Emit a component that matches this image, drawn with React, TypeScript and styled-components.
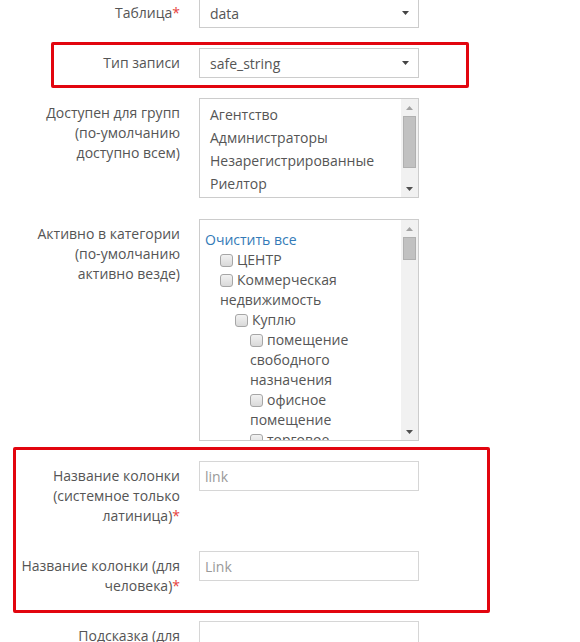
import styled, { createGlobalStyle } from 'styled-components';

const GlobalStyle = createGlobalStyle`
  html, body {
    margin: 0;
    padding: 0;
    background: #fff;
  }
  body {
    font-family: "Open Sans", "Liberation Sans", Arial, sans-serif;
    font-size: 14px;
    color: #555;
    overflow: hidden;
  }
`;

const Form = styled.form`
  width: 580px;
  margin-top: -2px;
  display: flex;
  flex-direction: column;
  gap: 20px;
`;

// red annotation frame drawn over a group of rows
const Highlight = styled.div<{ $top: number; $bottom: number; $left: number; $right: number }>`
  position: relative;
  display: flex;
  flex-direction: column;
  gap: 20px;

  &::after {
    content: '';
    position: absolute;
    top: ${p => p.$top}px;
    bottom: ${p => p.$bottom}px;
    left: ${p => p.$left}px;
    right: ${p => p.$right}px;
    border: 3px solid #e2050f;
    border-radius: 2px;
    pointer-events: none;
  }
`;

const Row = styled.div<{ $extra?: number }>`
  display: flex;
  align-items: flex-start;
  margin-top: ${p => p.$extra ?? 0}px;
`;

const Label = styled.label`
  flex-shrink: 0;
  width: 180px;
  padding: 5px 0;
  line-height: 20px;
  text-align: right;
  white-space: nowrap;
  color: #555;
`;

const Req = styled.span`
  color: #e6423c;
`;

const Control = styled.div`
  margin-left: 19px;
  width: 220px;
  flex-shrink: 0;
`;

const SelectBox = styled.div`
  box-sizing: border-box;
  height: 30px;
  border: 1px solid #ccc;
  background: #fff;
  padding: 0 9px 0 10px;
  display: flex;
  align-items: center;
  justify-content: space-between;
  color: #555;
`;

const TextInput = styled.input`
  box-sizing: border-box;
  display: block;
  width: 100%;
  height: 30px;
  border: 1px solid #d6d6d6;
  padding: 0 5px;
  font: inherit;
  color: #555;
  outline: none;

  &::placeholder {
    color: #999;
  }
`;

const ListBox = styled.div<{ $height: number }>`
  box-sizing: border-box;
  height: ${p => p.$height}px;
  border: 1px solid #ccc;
  display: flex;
  background: #fff;
`;

const ListContent = styled.div<{ $padTop: number; $padLeft: number }>`
  flex: 1;
  min-width: 0;
  overflow: hidden;
  padding: ${p => p.$padTop}px 4px 0 ${p => p.$padLeft}px;
`;

const Option = styled.div`
  line-height: 23px;
  white-space: nowrap;
  color: #555;
`;

const Scrollbar = styled.div`
  width: 17px;
  flex-shrink: 0;
  background: #f1f1f1;
  display: flex;
  flex-direction: column;
`;

const ScrollButton = styled.div`
  height: 17px;
  display: flex;
  align-items: center;
  justify-content: center;
`;

const Track = styled.div`
  flex: 1;
  padding: 0 2px;
`;

const Thumb = styled.div<{ $offset: number; $size: number }>`
  margin-top: ${p => p.$offset}px;
  height: ${p => p.$size}px;
  background: #c1c1c1;
  border: 1px solid #b0b0b0;
  box-sizing: border-box;
`;

const ClearLink = styled.a`
  display: block;
  line-height: 20px;
  color: #337ab7;
  text-decoration: none;
`;

const Tree = styled.ul`
  list-style: none;
  margin: 0;
  padding: 0 0 0 15px;
`;

const TreeItem = styled.li`
  line-height: 20px;
  color: #555;
`;

const Check = styled.span`
  display: inline-block;
  box-sizing: border-box;
  width: 13px;
  height: 13px;
  margin-right: 4px;
  vertical-align: -2px;
  border: 1px solid #a6a6a6;
  border-radius: 3px;
  background: linear-gradient(#f2f2f2, #d9d9d9);
`;

const Caret = ({ up, color }: { up?: boolean; color: string }) => (
  <svg width="7" height="4" viewBox="0 0 7 4">
    <path d={up ? 'M0 4 L3.5 0 L7 4 Z' : 'M0 0 L7 0 L3.5 4 Z'} fill={color} />
  </svg>
);

const ScrollBar = ({ offset, size }: { offset: number; size: number }) => (
  <Scrollbar>
    <ScrollButton>
      <Caret up color="#a3a3a3" />
    </ScrollButton>
    <Track>
      <Thumb $offset={offset} $size={size} />
    </Track>
    <ScrollButton>
      <Caret color="#505050" />
    </ScrollButton>
  </Scrollbar>
);

const Select = ({ value }: { value: string }) => (
  <SelectBox>
    <span>{value}</span>
    <Caret color="#444" />
  </SelectBox>
);

const groups = ['Агентство', 'Администраторы', 'Незарегистрированные', 'Риелтор', 'Собственник'];

const Item = ({ label, children }: { label: string; children?: React.ReactNode }) => (
  <TreeItem>
    <Check />
    {label}
    {children && <Tree>{children}</Tree>}
  </TreeItem>
);

const App = () => {
  return (
    <>
      <GlobalStyle />
      <Form>
        <Row>
          <Label>Таблица<Req>*</Req></Label>
          <Control>
            <Select value="data" />
          </Control>
        </Row>

        <Highlight $top={-6} $bottom={-10} $left={51} $right={111}>
          <Row>
            <Label>Тип записи</Label>
            <Control>
              <Select value="safe_string" />
            </Control>
          </Row>
        </Highlight>

        <Row>
          <Label>
            Доступен для групп<br />
            (по-умолчанию<br />
            доступно всем)
          </Label>
          <Control>
            <ListBox $height={100}>
              <ListContent $padTop={4} $padLeft={10}>
                {groups.map(g => (
                  <Option key={g}>{g}</Option>
                ))}
              </ListContent>
              <ScrollBar offset={0} size={52} />
            </ListBox>
          </Control>
        </Row>

        <Row $extra={1}>
          <Label>
            Активно в категории<br />
            (по-умолчанию<br />
            активно везде)
          </Label>
          <Control>
            <ListBox $height={222}>
              <ListContent $padTop={10} $padLeft={5}>
                <ClearLink href="#">Очистить все</ClearLink>
                <Tree>
                  <Item label="ЦЕНТР" />
                  <Item label="Коммерческая недвижимость">
                    <Item label="Куплю">
                      <Item label="помещение свободного назначения" />
                      <Item label="офисное помещение" />
                      <Item label="торговое помещение" />
                      <Item label="склад" />
                    </Item>
                  </Item>
                </Tree>
              </ListContent>
              <ScrollBar offset={0} size={23} />
            </ListBox>
          </Control>
        </Row>

        <Highlight $top={-14} $bottom={-12} $left={13} $right={90}>
          <Row>
            <Label>
              Название колонки<br />
              (системное только<br />
              латиница)<Req>*</Req>
            </Label>
            <Control>
              <TextInput placeholder="link" />
            </Control>
          </Row>
          <Row>
            <Label>
              Название колонки (для<br />
              человека)<Req>*</Req>
            </Label>
            <Control>
              <TextInput placeholder="Link" />
            </Control>
          </Row>
        </Highlight>

        <Row>
          <Label>
            Подсказка (для<br />
            человека)
          </Label>
          <Control>
            <TextInput />
          </Control>
        </Row>
      </Form>
    </>
  );
};

export default App;
